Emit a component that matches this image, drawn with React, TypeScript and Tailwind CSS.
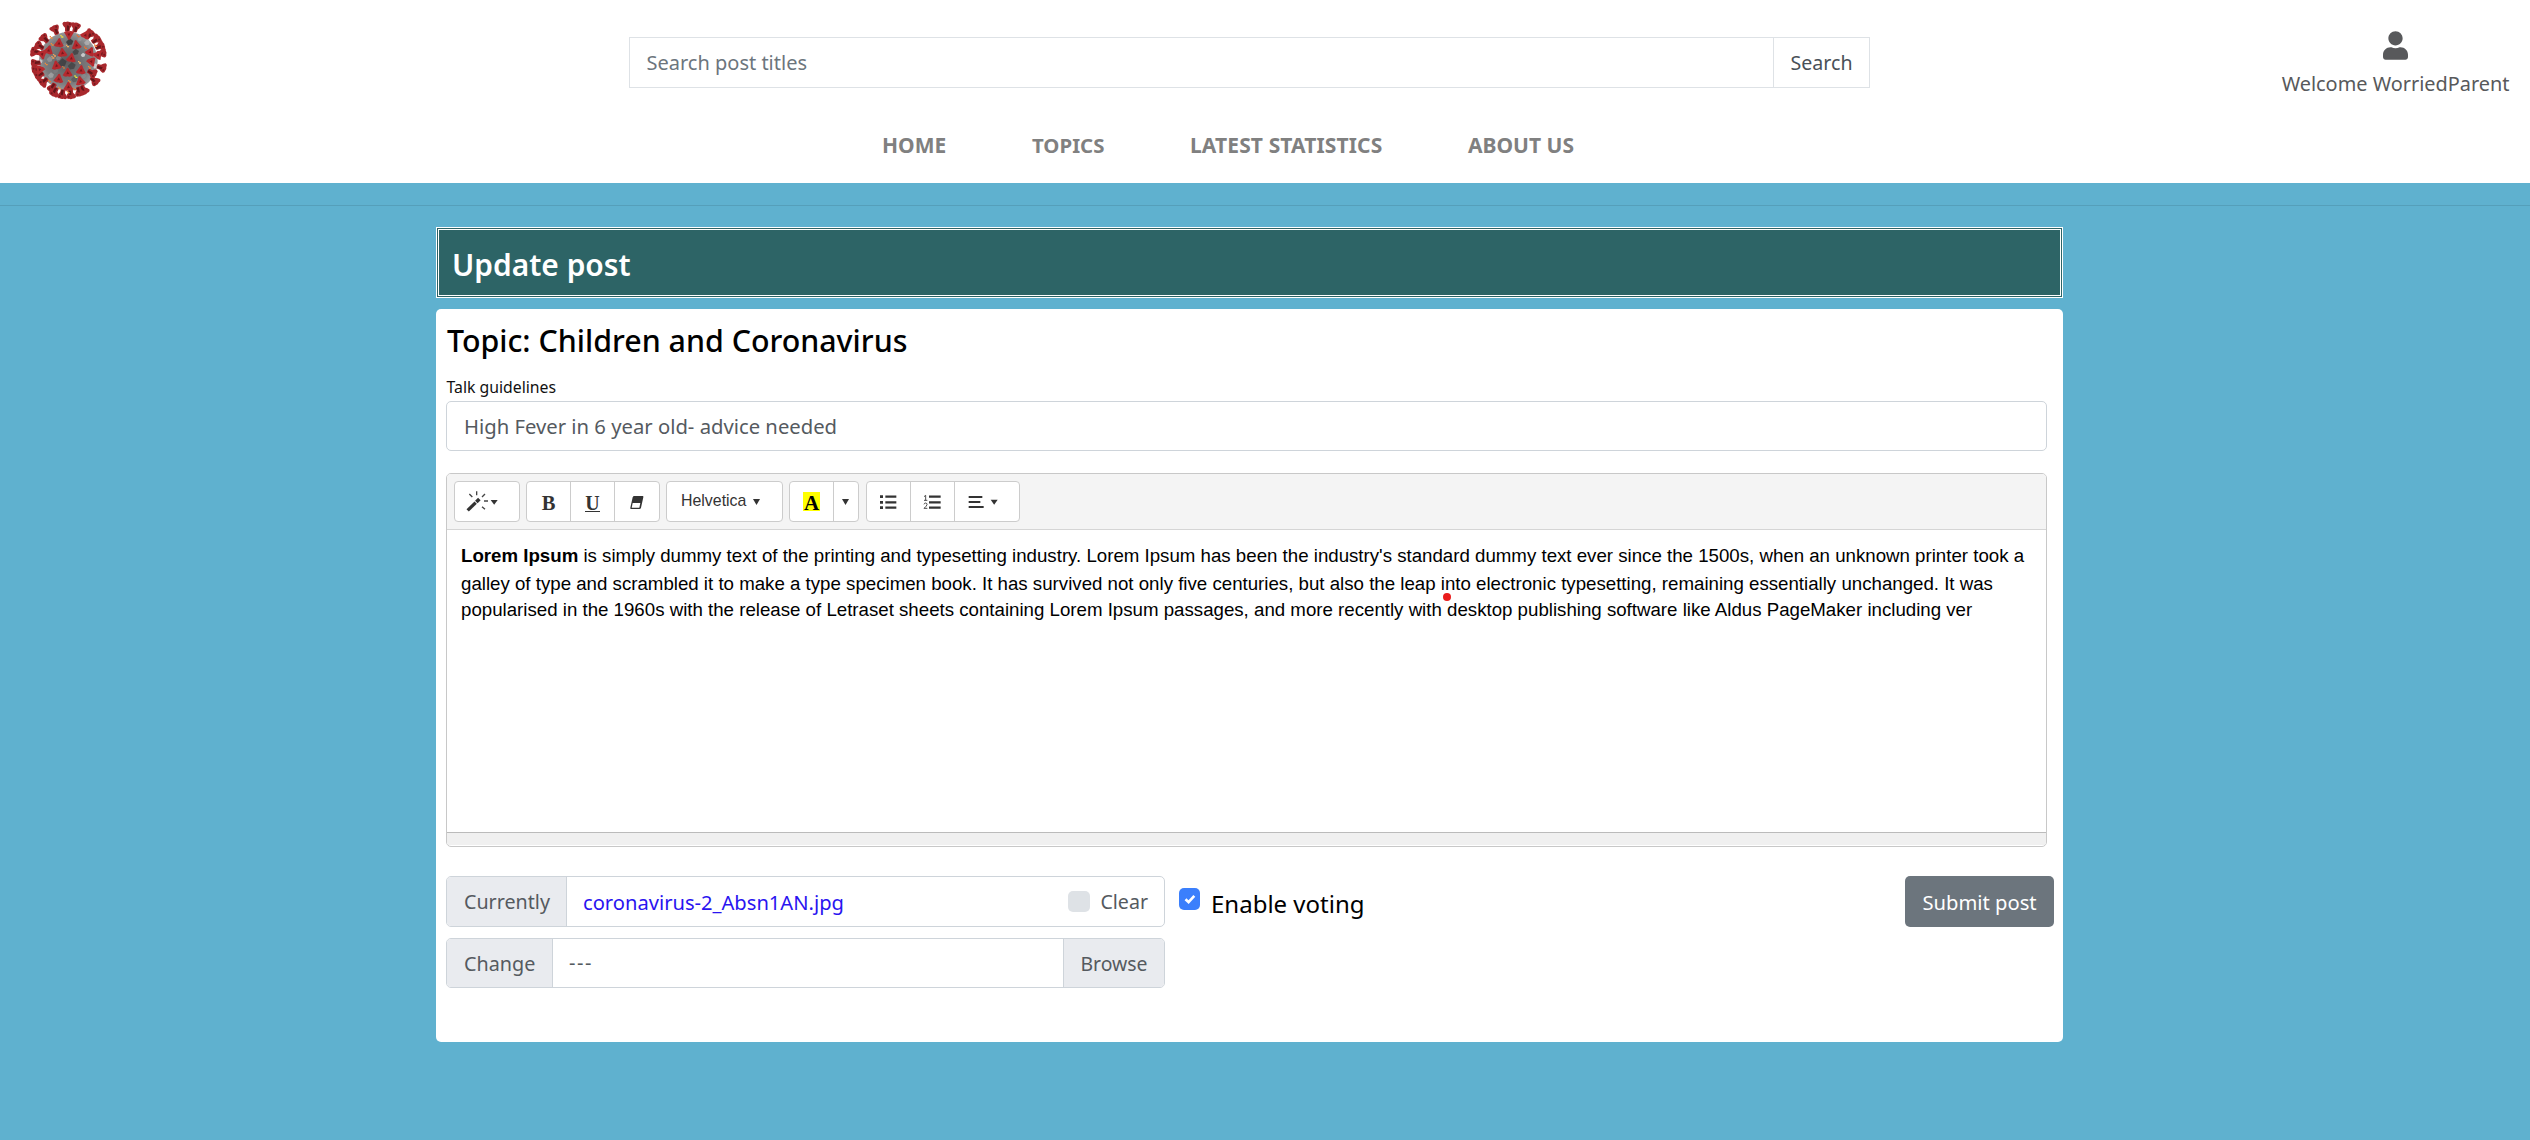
import React from "react";
import { FaUser } from "react-icons/fa";

const outerSpikes: [number, number, number][] = [
  [165, 89, -25], [203, 78, 0], [228, 81, 12], [132, 116, -45], [116, 139, -60], [103, 158, -80],
  [272, 102, 40], [291, 118, 50], [303, 138, 62], [309, 160, 82], [309, 205, 105], [287, 246, 135],
  [105, 193, -100], [108, 213, -112], [117, 231, -122], [131, 250, -135], [157, 268, -150],
  [188, 288, 188], [214, 288, 175], [254, 274, 150], [164, 281, -155], [240, 280, 165], [280, 222, 120],
];

const innerSpikes: [number, number, number][] = [
  [178, 131, 5], [208, 107, 180], [230, 137, -10], [147, 152, 15], [188, 160, -5], [215, 176, 10],
  [170, 198, -10], [204, 220, 0], [244, 212, 5], [177, 238, 8], [206, 262, 0], [242, 245, -12],
  [128, 166, 170], [272, 157, 25], [276, 188, 160], [258, 106, 30], [296, 166, 40], [120, 212, 200],
];

const specks: [number, number, string][] = [
  [158, 133, "#f08a3c"], [160, 172, "#f3a05a"], [140, 192, "#f08a3c"], [204, 138, "#f3b05a"], [236, 108, "#f06a2c"],
  [187, 109, "#f2e03a"], [240, 187, "#f5b868"], [192, 202, "#c07840"], [210, 244, "#f08a3c"], [229, 230, "#eef03a"],
  [150, 243, "#f0702c"], [180, 264, "#f08a3c"], [258, 143, "#f0702c"], [225, 267, "#f0702c"], [288, 137, "#f08a3c"],
  [270, 202, "#f08a3c"], [155, 112, "#f08a3c"], [165, 166, "#f3a05a"], [206, 276, "#f08a3c"],
];

const patches: [number, number, number, string][] = [
  [210, 128, 11, "#2c2c2e"], [188, 190, 13, "#3a3a3c"], [228, 158, 10, "#3c3c3e"], [216, 200, 12, "#404042"],
  [150, 180, 9, "#9a9a9c"], [154, 228, 9, "#a8a8aa"], [250, 167, 7, "#e4e4e6"], [122, 186, 7, "#d8d8da"],
  [287, 200, 8, "#e0e0e2"], [262, 130, 9, "#b4b4b6"], [176, 176, 8, "#8e8e90"], [224, 240, 10, "#58585a"],
  [252, 230, 8, "#8c8c8e"], [168, 215, 8, "#7e7e80"], [195, 138, 7, "#8a8a8c"], [240, 120, 7, "#9a9a9c"],
];

function VirusLogo() {
  return (
    <svg className="block h-[80px] w-[80px]" viewBox="88 62 240 240">
      <defs>
        <radialGradient id="shell" cx="0.48" cy="0.5" r="0.55">
          <stop offset="0" stopColor="#5c5c5e" />
          <stop offset="0.7" stopColor="#7c7c7e" />
          <stop offset="1" stopColor="#a4a4a6" />
        </radialGradient>
      </defs>
      <circle cx="206" cy="186" r="88" fill="url(#shell)" />
      {patches.map(([x, y, r, c], i) => (
        <path key={i} d={`M${x - r} ${y} l${r} ${-r} l${r} ${r * 0.7} l${-r * 0.4} ${r} l${-r} ${r * 0.2}z`} fill={c} opacity="0.75" />
      ))}
      {outerSpikes.map(([x, y, r], i) => (
        <g key={i} transform={`translate(${x} ${y}) rotate(${r})`}>
          <path d="M-15 -5 Q-13 -12 -5 -10 Q1 -13 7 -10 Q15 -10 15 -3 Q12 5 8 8 L7 17 Q0 20 -7 17 L-7 7 Q-13 2 -15 -5Z" fill="#a8282d" />
          <path d="M-1 0 L6 2 L5 16 L-2 16Z" fill="#64161a" />
          <circle cx="7" cy="-4" r="3" fill="#761a1f" />
        </g>
      ))}
      {specks.map(([x, y, c], i) => (
        <path key={i} d={`M${x - 5} ${y - 2}h4v4h5v4h-6v-4h-3z`} fill={c} />
      ))}
      {innerSpikes.map(([x, y, r], i) => (
        <g key={i} transform={`translate(${x} ${y}) rotate(${r})`}>
          <path d="M0 -15 Q4 -14 5 -8 L15 8 Q8 14 0 11 Q-8 14 -15 8 L-5 -8 Q-4 -14 0 -15Z" fill="#b52a2f" />
          <path d="M0 -4 L5 4 L-4 5Z" fill="#7a181d" />
        </g>
      ))}
    </svg>
  );
}

function Caret({ className = "" }: { className?: string }) {
  return (
    <svg className={"h-[6px] w-[7px] " + className} viewBox="0 0 21 16" preserveAspectRatio="none">
      <path d="M0 0H21L10.5 16Z" fill="#333" />
    </svg>
  );
}

const group = "flex h-[41px] shrink-0 overflow-hidden rounded-[4px] border border-[#ccc] bg-white";
const cell = "flex items-center justify-center border-r border-[#ccc]";
const addon = "flex items-center bg-[#e9ebef]";

function Toolbar() {
  return (
    <div className="flex h-[56px] items-start border-b border-[#d5d5d5] bg-[#f4f4f4] pl-[7px] pt-[7px]">
      <div className={group + " w-[66px]"}>
        <svg className="h-[39px] w-[64px]" viewBox="45 36 192 117">
          <path d="M83 121L107 98" stroke="#333" strokeWidth="10" />
          <path d="M109 96L118 87" stroke="#333" strokeWidth="11" />
          <path d="M110 64V76M88 72L97 81M135 72L126 81M132 93H144M126 110L135 118" stroke="#444" strokeWidth="4" />
          <path d="M152 90H173L162.5 104Z" fill="#333" />
        </svg>
      </div>
      <div className={group + " ml-[6px] w-[134px]"}>
        <div className={cell + " w-[44px] font-['Liberation_Serif',serif] text-[20.5px] font-bold text-[#333]"}>
          <span className="pt-[2px]">B</span>
        </div>
        <div className={cell + " w-[44px]"}>
          <span className="mt-[2px] h-[19px] border-b border-[#333] font-['Liberation_Serif',serif] text-[20px] font-bold leading-[20px] text-[#333]">U</span>
        </div>
        <svg className="h-[39px] w-[44px]" viewBox="525 36 132 117">
          <path d="M583 78H608Q611 78 610 82L603 113Q602 117 598 117H573Q570 117 571 113L578 82Q579 78 583 78Z" fill="#333" />
          <path d="M578 99H601L598 113H575Z" fill="#fff" />
        </svg>
      </div>
      <div className={group + " ml-[6px] w-[117px] pl-[14px]"}>
        <span className="mt-[5px] font-['Liberation_Sans',Arial,sans-serif] text-[15.9px] leading-[27px] text-[#333]">Helvetica</span>
        <Caret className="ml-[7px] mt-[17px]" />
      </div>
      <div className={group + " ml-[6px] w-[70px]"}>
        <div className={cell + " w-[44px]"}>
          <span className="mb-[1px] flex h-[19px] w-[17px] justify-center bg-[#ff0] font-['Liberation_Serif',serif] text-[21px] font-bold leading-[22px] text-black">A</span>
        </div>
        <div className="flex w-[23px] items-center justify-center">
          <Caret />
        </div>
      </div>
      <div className={group + " ml-[7px] w-[154px]"}>
        <div className={cell + " w-[44px]"}>
          <svg className="h-[39px] w-[43px]" viewBox="322 36 129 117">
            <path d="M377 80H410M377 97H410M377 113H410" stroke="#333" strokeWidth="7" />
            <path d="M361 80H370M361 97H370M361 113H370" stroke="#333" strokeWidth="8" />
          </svg>
        </div>
        <div className={cell + " w-[44px]"}>
          <svg className="h-[39px] w-[43px]" viewBox="454 36 129 117">
            <path d="M508 80H543M508 97H543M508 113H543" stroke="#333" strokeWidth="7" />
            <path d="M493 80L498 76V91M493 91H503M493 103Q494 99 498 99Q503 100 502 104Q501 108 493 115H503" stroke="#333" strokeWidth="2.6" fill="none" />
          </svg>
        </div>
        <svg className="h-[39px] w-[64px]" viewBox="586 36 192 117">
          <path d="M627 81H668M627 96H662M627 111H672" stroke="#333" strokeWidth="6" />
          <path d="M693 89H714L703.5 104Z" fill="#333" />
        </svg>
      </div>
    </div>
  );
}

export default function App() {
  return (
    <div className="min-h-[1140px] w-[2530px] bg-[#5fb1cf] font-['Noto_Sans','Open_Sans',sans-serif] text-[20px] leading-[30px] text-[#555a5f]">
      <header className="h-[183px] bg-white">
        <div className="grid h-[127px] grid-cols-[629px_1241px_1fr] items-start">
          <div className="pl-[29px] pt-[20px]">
            <VirusLogo />
          </div>
          <form className="mt-[37px] flex h-[51px] border border-[#dee2e6]">
            <div className="flex w-[1144px] items-center border-r border-[#dee2e6] pl-[16.5px] text-[#6c757d]">Search post titles</div>
            <div className="flex flex-1 items-center justify-center text-[19.6px] text-[#495057]">Search</div>
          </form>
          <div className="mr-[20.5px] mt-[31px] flex flex-col items-center justify-self-end text-[#58595b]">
            <FaUser className="h-[29px] w-[25px]" />
            <span className="mt-[9px] text-[19.9px]">Welcome WorriedParent</span>
          </div>
        </div>
        <nav className="flex pl-[882px] pt-[3px] text-[21px] font-bold text-[#808080]">
          <span className="w-[150px]">HOME</span>
          <span className="w-[158px] text-[20.4px]">TOPICS</span>
          <span className="w-[278px] text-[21px] tracking-[0.12px]">LATEST STATISTICS</span>
          <span>ABOUT US</span>
        </nav>
      </header>
      <hr className="mt-[22px] border-t border-[#559fba]" />
      <main className="ml-[436px] mt-[21px] w-[1627px]">
        <div className="h-[71px] border-[3px] border-double border-white bg-[#2d6466] pl-[13px] pt-[15px]">
          <h1 className="text-[29.9px] font-semibold leading-[40px] text-white">Update post</h1>
        </div>
        <section className="mt-[11px] h-[733px] rounded-[5px] bg-white pl-[10px] pt-[8px]">
          <h2 className="pl-[1px] text-[30.35px] font-medium leading-[48px] text-black">Topic: Children and Coronavirus</h2>
          <p className="mt-[10px] pl-[0.5px] text-[15.8px] leading-[24px] text-[#111]">Talk guidelines</p>
          <div className="mt-[2px] flex h-[50px] w-[1601px] items-center rounded-[5px] border border-[#ced4da] pl-[17px] text-[20.25px] text-[#555a5f]">
            High Fever in 6 year old- advice needed
          </div>
          <div className="mt-[22px] flex h-[374px] w-[1601px] flex-col overflow-hidden rounded-[5px] border border-[#c8c8c8]">
            <Toolbar />
            <div className="relative flex-1 pl-[14px] pt-[12px] font-['Liberation_Sans',Arial,sans-serif] text-[18.68px] leading-[26px] text-black whitespace-nowrap">
              <p className="mb-px leading-[28px]">
                <b>Lorem Ipsum</b> is simply dummy text of the printing and typesetting industry. Lorem Ipsum has been the industry's standard dummy text ever since the 1500s, when an unknown printer took a
              </p>
              <p>galley of type and scrambled it to make a type specimen book. It has survived not only five centuries, but also the leap into electronic typesetting, remaining essentially unchanged. It was</p>
              <p>popularised in the 1960s with the release of Letraset sheets containing Lorem Ipsum passages, and more recently with desktop publishing software like Aldus PageMaker including ver</p>
              <i className="absolute left-[996px] top-[63px] h-[8px] w-[8px] rounded-full bg-[#ea1c1c]" />
            </div>
            <div className="mb-[1px] h-[13px] shrink-0 border-t border-[#bbb] bg-[#f0f0f0]" />
          </div>
          <div className="mt-[29px] flex items-start">
            <div className="w-[719px]">
              <div className="flex h-[51px] overflow-hidden rounded-[5px] border border-[#ced4da]">
                <div className={addon + " w-[120px] border-r border-[#ced4da] pl-[17px] pt-px text-[19.7px]"}>Currently</div>
                <div className="flex flex-1 items-center pl-[16px] pr-[16px]">
                  <span className="pt-px text-[20.15px] text-[#2a14f0]">coronavirus-2_Absn1AN.jpg</span>
                  <span className="ml-auto h-[21px] w-[22px] rounded-[5px] bg-[#dee2e6]" />
                  <span className="ml-[10px] pt-px text-[19.6px]">Clear</span>
                </div>
              </div>
              <div className="mt-[11px] flex h-[50px] overflow-hidden rounded-[5px] border border-[#ced4da]">
                <div className={addon + " w-[106px] border-r border-[#ced4da] pl-[17px] pt-px text-[19.8px]"}>Change</div>
                <div className="flex flex-1 items-center pl-[16px] tracking-[1.6px]">---</div>
                <div className={addon + " w-[101px] justify-center border-l border-[#ced4da] pt-px text-[19.4px]"}>Browse</div>
              </div>
            </div>
            <div className="ml-[14px] mt-[12px] flex h-[22px] w-[21px] items-center justify-center rounded-[5px] bg-[#3b7ffc]">
              <svg className="h-[12px] w-[12px]" viewBox="0 0 12 12">
                <path d="M1.5 6.2L4.6 9.2L10.3 2.8" fill="none" stroke="#fff" strokeWidth="2.6" />
              </svg>
            </div>
            <span className="ml-[11px] mt-[13px] text-[24px] text-black">Enable voting</span>
            <button className="ml-auto mr-[9px] h-[51px] w-[149px] rounded-[5px] bg-[#6c757d] text-[20.2px] text-white">Submit post</button>
          </div>
        </section>
      </main>
    </div>
  );
}
